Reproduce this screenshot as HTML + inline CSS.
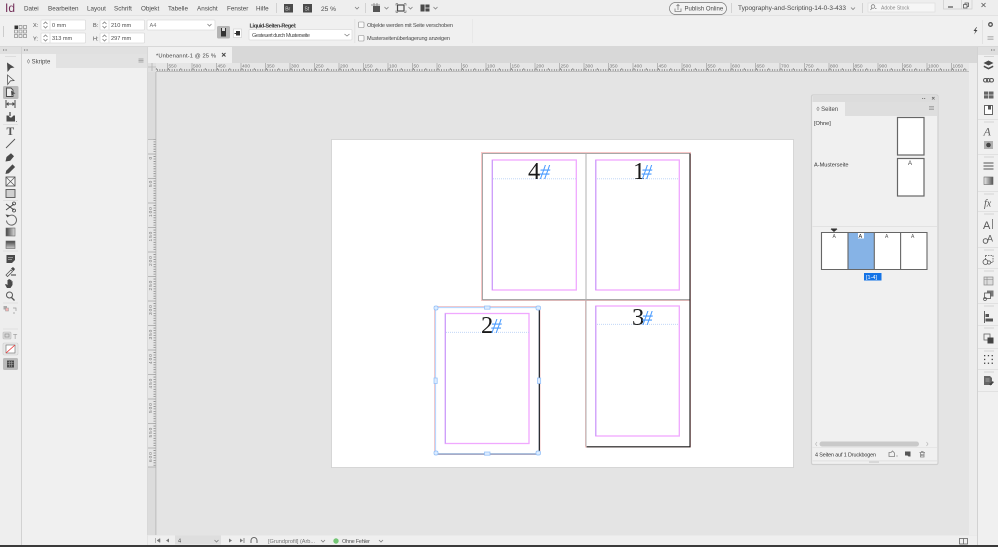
<!DOCTYPE html>
<html lang="de"><head><meta charset="utf-8"><title>InDesign</title>
<style>
html,body{margin:0;padding:0;width:998px;height:547px;overflow:hidden;background:#e4e4e4}
svg{display:block;filter:blur(.3px)}
text{font-family:"Liberation Sans",sans-serif;font-size:6.3px;fill:#4a4a4a}
.s{font-size:5.6px}.r{font-size:4.8px;fill:#777}
.n{font-family:"Liberation Serif",serif;font-size:24.5px;fill:#1a1a1a}
.h{font-family:"Liberation Serif",serif;font-style:italic;font-size:21px;fill:#4a9bff}
.f{fill:#fff;stroke:#dcdcdc;stroke-width:.8}
.l{fill:none;stroke:#4a4a4a;stroke-width:1}
.d{fill:#4a4a4a}
.g{fill:none;stroke:#808080;stroke-width:.8}
.m{fill:none;stroke:#f0a8ff;stroke-width:1.3}
.b{fill:none;stroke:#b8d0f5;stroke-width:.8;stroke-dasharray:1 1}
.hd{fill:#dcecff;stroke:#8dbdf8;stroke-width:.7}
</style></head><body>
<svg width="998" height="547" viewBox="0 0 998 547" xmlns="http://www.w3.org/2000/svg">
<!-- base -->
<rect width="998" height="547" fill="#e4e4e4"/>
<rect width="998" height="16" fill="#eeeeee"/>
<rect y="15" width="998" height="1" fill="#e2e2e2"/>
<rect y="16" width="998" height="31" fill="#f0f0f0"/>
<rect y="46" width="998" height="1" fill="#d8d8d8"/>

<!-- menu -->
<text x="5" y="12" style="font-size:12px;fill:#74305a">Id</text>
<text x="24" y="10.5">Datei</text><text x="48" y="10.5">Bearbeiten</text><text x="87" y="10.5">Layout</text><text x="114" y="10.5">Schrift</text><text x="141" y="10.5">Objekt</text><text x="168" y="10.5">Tabelle</text><text x="197" y="10.5">Ansicht</text><text x="227" y="10.5">Fenster</text><text x="256" y="10.5">Hilfe</text>
<rect x="276" y="3" width=".8" height="10" fill="#ccc"/>
<rect x="284" y="4" width="9" height="8.5" fill="#4a4a4a"/><text x="285.2" y="10.5" style="font-size:5px;fill:#ddd">Br</text>
<rect x="303" y="4" width="9" height="8.5" fill="#4a4a4a"/><text x="304.5" y="10.5" style="font-size:5px;fill:#ddd">St</text>
<text x="321" y="11" style="font-size:6.6px">25 %</text>
<path class="g" d="M355 7l2 2 2-2M384.500 7l2 2 2-2M408.500 7l2 2 2-2M433.500 7l2 2 2-2"/>
<rect x="365" y="3" width=".8" height="10" fill="#ccc"/>
<rect x="373" y="6" width="7" height="6" fill="#555"/><path class="g" d="M371 5h9M374 3v3M377 3v3"/>
<rect x="397.500" y="5" width="6.500" height="6" fill="none" stroke="#4a4a4a" stroke-width="1.200"/><path class="g" d="M396 3.500h2M396 3.500v2M404 3.500h2M406 3.500v2M396 12.500h2M396 10.500v2M404 12.500h2M406 10.500v2"/>
<rect x="420.500" y="4.500" width="9" height="7" fill="#4a4a4a"/><path d="M425 4.500v7M425 8h4.500" stroke="#eee" stroke-width=".8"/>

<rect x="669.500" y="2.500" width="57" height="12" rx="6" fill="#f2f2f2" stroke="#777" stroke-width=".7"/>
<path class="g" d="M675 8.500v3h6v-3M678 10v-5.500M676.500 6l1.500-1.500 1.500 1.500"/>
<text x="684.500" y="10.500" style="font-size:6px">Publish Online</text>
<rect x="731" y="3" width=".8" height="10" fill="#ccc"/>
<text x="738" y="10" style="font-size:6.500px" textLength="108">Typography-and-Scripting-14-0-3-433</text>
<path class="g" d="M851 7.500l2 2 2-2"/>
<rect x="862" y="3" width=".8" height="10" fill="#ccc"/>
<rect x="868" y="3" width="67" height="9" fill="#f6f6f6" stroke="#ddd" stroke-width=".7"/>
<circle cx="873" cy="6.500" r="1.800" class="g"/><path class="g" d="M872 8l-1.500 2M875 8.500l1.500 0"/>
<text x="881" y="9.500" style="font-size:5px;fill:#888">Adobe Stock</text>
<path d="M943.500 0v9h28.500V0M961.500 0v9" fill="none" stroke="#ccc" stroke-width=".7"/>
<path d="M948 7h5" stroke="#333" stroke-width="1"/><path class="g" style="stroke:#555" d="M963.500 4.500h3.500v3.500h-3.500zM965 4.500v-1.500h3.500v3.500h-1.500"/>
<path d="M981.500 3l4 4M985.500 3l-4 4" stroke="#555" stroke-width=".8"/>

<!-- control bar -->
<rect x="3" y="26" width=".8" height="11" fill="#c4c4c4"/>
<g fill="none" stroke="#8a8a8a" stroke-width=".7">
<rect x="19" y="25.500" width="3" height="3"/><rect x="23.500" y="25.500" width="3" height="3"/><rect x="14.500" y="30" width="3" height="3"/><rect x="19" y="30" width="3" height="3"/><rect x="23.500" y="30" width="3" height="3"/><rect x="14.500" y="34.500" width="3" height="3"/><rect x="19" y="34.500" width="3" height="3"/><rect x="23.500" y="34.500" width="3" height="3"/></g>
<rect x="14.500" y="25.500" width="3.500" height="3.500" fill="#333"/>
<text class="s" x="33" y="27">X:</text><text class="s" x="33" y="40.500">Y:</text><text class="s" x="93" y="27">B:</text><text class="s" x="93" y="40.500">H:</text>
<rect class="f" x="41" y="20" width="44.500" height="10" rx="1"/><rect class="f" x="41" y="33" width="44.500" height="10" rx="1"/><rect class="f" x="100" y="20" width="44.500" height="10" rx="1"/><rect class="f" x="100" y="33" width="44.500" height="10" rx="1"/>
<path class="g" d="M50 20v10M50 33v10M109 20v10M109 33v10" style="stroke:#ddd"/>
<path class="g" d="M43.500 24l2-2 2 2M43.500 26l2 2 2-2M43.500 37l2-2 2 2M43.500 39l2 2 2-2M102.500 24l2-2 2 2M102.500 26l2 2 2-2M102.500 37l2-2 2 2M102.500 39l2 2 2-2"/>
<text class="s" x="52" y="27">0 mm</text><text class="s" x="52" y="40">313 mm</text><text class="s" x="111" y="27">210 mm</text><text class="s" x="111" y="40">297 mm</text>
<rect class="f" x="147" y="20" width="68" height="10" rx="1"/><text class="s" x="149.500" y="27" style="fill:#777">A4</text><path class="g" d="M207.500 24l2 2 2-2"/>
<rect x="217" y="26" width="13" height="12.500" rx="1.500" fill="#b4b4b4"/><rect x="221" y="28" width="5" height="8.500" fill="#333"/><path d="M222 28h3v3h-3z" fill="#ddd"/>
<rect x="233.500" y="29" width="8" height="8.500" fill="#fff" stroke="#ccc" stroke-width=".6"/><rect x="236" y="31" width="4" height="4.500" fill="#333"/><rect x="234.500" y="33" width="2" height="1" fill="#333"/>
<text class="s" x="249.500" y="27.500" style="fill:#333;font-weight:700" textLength="47">Liquid-Seiten-Regel:</text>
<rect class="f" x="249" y="29.500" width="103" height="10.500" rx="1"/><text class="s" x="252" y="37" textLength="58">Gesteuert durch Musterseite</text><path class="g" d="M344.500 34l2.500 2 2.500-2"/>
<rect x="354.500" y="19" width=".7" height="24" fill="#ddd"/>
<rect x="358.500" y="22" width="5.500" height="5.500" rx=".8" fill="#fafafa" stroke="#888" stroke-width=".6"/><rect x="358.500" y="35.500" width="5.500" height="5.500" rx=".8" fill="#fafafa" stroke="#888" stroke-width=".6"/>
<text class="s" x="367" y="27" textLength="86">Objekte werden mit Seite verschoben</text><text class="s" x="367" y="40" textLength="83">Musterseitenüberlagerung anzeigen</text>
<rect x="472" y="19" width=".7" height="24" fill="#e4e4e4"/>
<path d="M976.500 27l-3 4h2l-1.500 3.500 3.500-4.500h-2l1.500-3z" fill="#444"/>
<rect x="982" y="20" width=".7" height="24" fill="#ddd"/>
<circle cx="990.500" cy="24.500" r="1.800" fill="none" stroke="#555" stroke-width="1.300"/>
<path d="M987.500 36.500h6M987.500 38h6M987.500 39.500h6" stroke="#aaa" stroke-width=".7"/>

<!-- panel strips -->
<rect y="47" width="148" height="7" fill="#e0e0e0"/>
<path d="M3 50h1.200M5.500 50h1.200M24 50h1.200M26.500 50h1.200" stroke="#666" stroke-width="1"/>
<rect y="54" width="21" height="493" fill="#eeeeee"/>
<rect x="21" y="47" width="1" height="500" fill="#d2d2d2"/>
<rect x="22" y="54" width="125" height="493" fill="#f0f0f0"/>
<rect x="22" y="54" width="125" height="14" fill="#e2e2e2"/>
<rect x="22" y="54" width="34" height="15" fill="#f0f0f0"/>
<text x="27" y="63.500" style="font-size:6px">◊ Skripte</text>
<path d="M138.500 59h5M138.500 60.500h5M138.500 62h5" stroke="#999" stroke-width=".8"/>
<rect x="5" y="56" width="11" height="1" fill="#ddd"/>
<rect x="147" y="47" width="1" height="488" fill="#d8d8d8"/>

<!-- tab strip -->
<rect x="148" y="47" width="830" height="16" fill="#d8d8d8"/>
<rect x="148" y="47" width="84" height="16" fill="#f0f0f0"/>
<text x="156" y="57.500" style="font-size:5.800px;fill:#444" textLength="60">*Unbenannt-1 @ 25 %</text>
<path d="M222 53l3.500 3.500M225.500 53l-3.500 3.500" stroke="#444" stroke-width="1"/>

<!-- h ruler -->
<rect x="148" y="63" width="821" height="8.500" fill="#e6e6e6"/>
<rect x="148" y="71" width="821" height=".8" fill="#b4b4b4"/>
<rect x="148" y="63" width="8" height="9" fill="#e0e0e0"/><path class="g" d="M152 63v8M148 67h8" style="stroke:#b4b4b4"/>
<path d="M157 70h811" stroke="#888" stroke-width="2" stroke-dasharray=".8 1.650" fill="none"/>
<path d="M155.900 69h812" stroke="#888" stroke-width="2" stroke-dasharray=".8 11.450" fill="none"/>
<path d="M167.500 63v8M192 63v8M216.500 63v8M241 63v8M265.500 63v8M290 63v8M314.500 63v8M339 63v8M363.500 63v8M388 63v8M412.500 63v8M437 63v8M461.500 63v8M486 63v8M510.500 63v8M535 63v8M559.500 63v8M584 63v8M608.500 63v8M633 63v8M657.500 63v8M682 63v8M706.500 63v8M731 63v8M755.500 63v8M780 63v8M804.500 63v8M829 63v8M853.500 63v8M878 63v8M902.500 63v8M927 63v8M951.500 63v8" stroke="#a0a0a0" stroke-width=".7" fill="none"/>
<g>
<text class="r" x="168.500" y="67.500">550</text><text class="r" x="193" y="67.500">500</text><text class="r" x="217.500" y="67.500">450</text><text class="r" x="242" y="67.500">400</text><text class="r" x="266.500" y="67.500">350</text><text class="r" x="291" y="67.500">300</text><text class="r" x="315.500" y="67.500">250</text><text class="r" x="340" y="67.500">200</text><text class="r" x="364.500" y="67.500">150</text><text class="r" x="389" y="67.500">100</text><text class="r" x="413.500" y="67.500">50</text><text class="r" x="438" y="67.500">0</text><text class="r" x="462.500" y="67.500">50</text><text class="r" x="487" y="67.500">100</text><text class="r" x="511.500" y="67.500">150</text><text class="r" x="536" y="67.500">200</text><text class="r" x="560.500" y="67.500">250</text><text class="r" x="585" y="67.500">300</text><text class="r" x="609.500" y="67.500">350</text><text class="r" x="634" y="67.500">400</text><text class="r" x="658.500" y="67.500">450</text><text class="r" x="683" y="67.500">500</text><text class="r" x="707.500" y="67.500">550</text><text class="r" x="732" y="67.500">600</text><text class="r" x="756.500" y="67.500">650</text><text class="r" x="781" y="67.500">700</text><text class="r" x="805.500" y="67.500">750</text><text class="r" x="830" y="67.500">800</text><text class="r" x="854.500" y="67.500">850</text><text class="r" x="879" y="67.500">900</text><text class="r" x="903.500" y="67.500">950</text><text class="r" x="928" y="67.500">1000</text><text class="r" x="952.500" y="67.500">1050</text>
</g>

<!-- v ruler -->
<rect x="148" y="72" width="8" height="463" fill="#dcdcdc"/>
<rect x="148" y="139" width="8" height="328" fill="#e6e6e6"/>
<rect x="155.500" y="72" width=".8" height="463" fill="#b4b4b4"/>
<path d="M154.500 139v328" stroke="#888" stroke-width="2" stroke-dasharray=".8 1.650" fill="none"/>
<path d="M148 139.300h8M148 154h8M148 178.500h8M148 203h8M148 227.500h8M148 252h8M148 276.500h8M148 301h8M148 325.500h8M148 350h8M148 374.500h8M148 399h8M148 423.500h8M148 448h8M148 467h8" stroke="#a8a8a8" stroke-width=".7" fill="none"/>
<g style="letter-spacing:.9px">
<text class="r" transform="translate(152 159.500) rotate(-90)">0</text>
<text class="r" transform="translate(152 187) rotate(-90)">50</text>
<text class="r" transform="translate(152 217) rotate(-90)">100</text>
<text class="r" transform="translate(152 241.500) rotate(-90)">150</text>
<text class="r" transform="translate(152 266) rotate(-90)">200</text>
<text class="r" transform="translate(152 290.500) rotate(-90)">250</text>
<text class="r" transform="translate(152 315) rotate(-90)">300</text>
<text class="r" transform="translate(152 339.500) rotate(-90)">350</text>
<text class="r" transform="translate(152 364) rotate(-90)">400</text>
<text class="r" transform="translate(152 388.500) rotate(-90)">450</text>
<text class="r" transform="translate(152 413) rotate(-90)">500</text>
<text class="r" transform="translate(152 437.500) rotate(-90)">550</text>
<text class="r" transform="translate(152 462) rotate(-90)">600</text>
</g>

<!-- canvas right -->
<rect x="969" y="63" width="8.500" height="472" fill="#ececec"/>

<!-- page -->
<rect x="331.500" y="139.500" width="462" height="328" fill="#fff" stroke="#cfcfcf" stroke-width=".8"/>
<!-- bleeds -->
<g fill="none" stroke="#f7c0c0" stroke-width=".9">
<rect x="481.500" y="152.500" width="209" height="148"/>
<rect x="585.500" y="300" width="105" height="147"/>
<rect x="434.500" y="306.500" width="105.500" height="148"/>
</g>
<!-- page edges -->
<path d="M482.500 300V153.500H690" fill="none" stroke="#a8a8a8" stroke-width="1"/>
<path d="M482.500 299.800H690" stroke="#8c8c8c" stroke-width="1"/>
<path d="M586 153.500V446" stroke="#b0b0b0" stroke-width="1"/>
<path d="M690 153.500V446.800H586.500" fill="none" stroke="#1a1a1a" stroke-width="1.100"/>
<!-- page 2 -->
<path d="M435.500 307.500H539.300V454H435.500Z" fill="none" stroke="#b8d8ff" stroke-width="1.200"/>
<path d="M539.300 308V453.500" stroke="#111" stroke-width="1.100"/>
<path d="M436 454H539" stroke="#6b8cb8" stroke-width="1.100"/>
<!-- margins -->
<rect class="m" x="492.300" y="160" width="84" height="130"/>
<rect class="m" x="595.800" y="160" width="83.500" height="130"/>
<rect class="m" x="595.800" y="306" width="83.500" height="130"/>
<rect class="m" x="445.300" y="313.500" width="83.700" height="130"/>
<path d="M492.300 160v130M595.800 160v130M595.800 306v130M445.300 313.500v130" stroke="#c49cf8" stroke-width="1"/>
<path class="b" d="M493 178.800h83M597 178.800h82M597 324.300h82M446 332.300h83"/>
<!-- numbers -->
<text class="n" x="528" y="179">4</text><text class="h" x="539.500" y="179">#</text>
<text class="n" x="633" y="179">1</text><text class="h" x="641.500" y="179">#</text>
<text class="n" x="632" y="325">3</text><text class="h" x="642" y="325">#</text>
<text class="n" x="481" y="333">2</text><text class="h" x="491" y="333">#</text>
<!-- handles -->
<g><rect class="hd" x="434" y="306" width="4" height="4" rx="1.500"/><rect class="hd" x="484.500" y="306" width="5.500" height="3.200"/><rect class="hd" x="536" y="306" width="4.500" height="4" rx="1.500"/><rect class="hd" x="434" y="378" width="3.200" height="5.500"/><rect class="hd" x="537.500" y="378" width="3.200" height="5.500"/><rect class="hd" x="434" y="451" width="4" height="4" rx="1.500"/><rect class="hd" x="484.500" y="452" width="5.500" height="3.200"/><rect class="hd" x="536" y="451" width="4.500" height="4" rx="1.500"/></g>

<!-- pages panel -->
<rect x="811.500" y="95" width="126.500" height="369.500" rx="1.500" fill="#f0f0f0" stroke="#cfcfcf" stroke-width="1.200"/>
<rect x="812.500" y="96" width="124.500" height="6.500" fill="#dcdcdc"/>
<rect x="812.500" y="102" width="124.500" height="14" fill="#dedede"/>
<rect x="812.500" y="102" width="32.500" height="14" fill="#f0f0f0"/>
<text x="816.500" y="111" style="font-size:6px">◊ Seiten</text>
<path d="M929 106.500h5M929 108h5M929 109.500h5" stroke="#999" stroke-width=".8"/>
<path d="M922 98.500h1.200M924 98.500h1.200M932 97l2.500 2.500M934.500 97l-2.500 2.500" stroke="#666" stroke-width=".8"/>
<text class="s" x="814" y="125" style="fill:#333">[Ohne]</text>
<text class="s" x="814" y="166.500" style="fill:#333">A-Musterseite</text>
<rect x="897.500" y="117.500" width="26.500" height="37.500" fill="#fff" stroke="#666" stroke-width="1.200"/>
<rect x="897.500" y="158.500" width="26.500" height="37.500" fill="#fff" stroke="#666" stroke-width="1.200"/>
<text x="908" y="165" style="font-size:6px;fill:#444">A</text>
<rect x="812.500" y="226" width="124.500" height=".9" fill="#e0e0e0"/>
<path d="M830.500 229h7l-3.500 3z" fill="#333"/><rect x="831" y="228.500" width="6" height=".9" fill="#333"/>
<rect x="821.500" y="232.500" width="106" height="37" fill="#fff"/>
<rect x="847.800" y="232.500" width="26.500" height="37" fill="#86b3e6"/>
<path d="M821.500 232.500H927V269.500H821.500ZM848 232.500V269.500M874.300 232.500V269.500M900.600 232.500V269.500" fill="none" stroke="#666" stroke-width="1.100"/>
<rect x="858" y="233" width="6" height="5.500" fill="#fff"/>
<g><text x="832.500" y="238" style="font-size:5px;fill:#555">A</text><text x="858.500" y="238" style="font-size:5.500px;fill:#222">A</text><text x="885" y="238" style="font-size:5px;fill:#555">A</text><text x="911" y="238" style="font-size:5px;fill:#555">A</text></g>
<rect x="864" y="273" width="17.500" height="7.500" fill="#1473e6"/>
<text x="866" y="279" style="font-size:5.500px;fill:#fff">[1-4]</text>
<!-- scrollbar + footer -->
<rect x="819.500" y="441.500" width="99.500" height="5" rx="2.500" fill="#c9c9c9"/>
<path d="M817 442l-1.500 2 1.500 2M926.500 442l1.500 2-1.500 2" fill="none" stroke="#bbb" stroke-width=".7"/>
<rect x="812.500" y="447" width="124.500" height=".8" fill="#e4e4e4"/>
<text x="815" y="456.500" style="font-size:5.400px;fill:#333" textLength="61">4 Seiten auf 1 Druckbogen</text>
<path class="g" d="M889 456.500v-4h2l1.500-1.500 2 2v3.500z"/><circle cx="897" cy="456" r=".5" fill="#555"/>
<path d="M905 451.500h5.500v5h-2l-1-1H905z" fill="#555"/>
<path class="g" d="M919.500 452.500h5.500M920.500 452.500v4.500h3.500v-4.500M921 451.500h2.500M921.700 454v2M922.900 454v2"/>
<rect x="812.500" y="460.500" width="124.500" height=".8" fill="#dcdcdc"/>
<rect x="869" y="461" width="10" height="2" fill="#d8d8d8"/>

<!-- status -->
<rect x="148" y="535.500" width="830" height="9.500" fill="#efefef"/>
<path d="M155.500 538v5M160 538.500l-3 2 3 2z" fill="#777" stroke="#777" stroke-width=".5"/>
<path d="M169 538.500l-3 2 3 2z" fill="#777"/>
<rect x="175" y="535.500" width="46" height="9" fill="#dedede"/>
<text class="s" x="178" y="542.500">4</text>
<path class="g" d="M214.500 540l2 2 2-2M321 540l2 2 2-2M379 540l2 2 2-2"/>
<path d="M229 538.500l3 2-3 2zM240 538.500l3 2-3 2z" fill="#777"/><path d="M244 538v5" stroke="#777" stroke-width=".8"/>
<path d="M251 543v-2.500a3 3 0 0 1 6 0V543" fill="none" stroke="#666" stroke-width="1"/>
<text class="s" x="268" y="543" style="fill:#777" textLength="47">[Grundprofil] (Arb...</text>
<circle cx="336" cy="541" r="2.700" fill="#74c675"/>
<text class="s" x="342" y="543" style="fill:#555" textLength="28">Ohne Fehler</text>
<rect x="959.500" y="538.500" width="8" height="5.500" fill="none" stroke="#666" stroke-width=".8"/><path d="M963.500 538.500v5.500" stroke="#666" stroke-width=".8"/>
<rect y="545" width="998" height="2" fill="#3a3a3a"/>

<!-- right dock -->
<rect x="977" y="55" width="21" height="490" fill="#f0f0f0"/>
<rect x="977" y="47" width="1" height="498" fill="#d2d2d2"/>
<rect x="978" y="47" width="20" height="8" fill="#dfdfdf"/>
<path d="M991 50h1.200M993.500 50h1.200" stroke="#666" stroke-width="1"/>
<path d="M978 119.500h20M978 154.500h20M978 191.500h20M978 211.500h20M978 247.500h20M978 268.500h20M978 303.500h20M978 325.500h20M978 348.500h20M978 369.500h20M978 391.500h20" stroke="#dcdcdc" stroke-width=".8"/>
<path d="M984 56.500h10M984 122h10M984 157h10M984 194h10M984 214h10M984 250h10M984 271h10M984 306h10M984 328h10M984 351h10M984 372h10" stroke="#cccccc" stroke-width=".8"/>
<path class="d" d="M988.500 60.500l5 2.500-5 2.500-5-2.500zM984 65.500l4.500 2.200 4.500-2.200.4 1.500-4.900 2.500-4.900-2.500z"/>
<g fill="none" stroke="#555" stroke-width="1"><rect x="983.500" y="78.500" width="4" height="3.500" rx="1.700"/><rect x="986.500" y="78.500" width="3.500" height="3.500" rx="1.700"/><rect x="989.500" y="78.500" width="4" height="3.500" rx="1.700"/></g>
<rect x="984" y="91.500" width="9.500" height="7" fill="#666"/><path d="M984 95h9.500M988.500 91.500v7" stroke="#ddd" stroke-width=".8"/>
<path d="M984.500 105.500h8v9h-8z" fill="#fff" stroke="#666" stroke-width="1"/><rect x="988" y="105" width="3" height="4.500" fill="#555"/>
<text x="983.500" y="135.500" style="font-family:'Liberation Serif',serif;font-style:italic;font-size:12px;fill:#666">A</text>
<rect x="984" y="141" width="9" height="8" fill="#b0b0b0"/><circle cx="988.500" cy="145" r="2.300" fill="#444"/>
<path d="M983.500 163h10M983.500 166h10M983.500 169h10" stroke="#555" stroke-width="1"/>
<defs><linearGradient id="gr"><stop offset="0" stop-color="#eee"/><stop offset="1" stop-color="#555"/></linearGradient></defs>
<rect x="984" y="177" width="9" height="7.500" fill="url(#gr)" stroke="#666" stroke-width=".6"/>
<text x="984" y="206.500" style="font-family:'Liberation Serif',serif;font-style:italic;font-size:10px;fill:#555">fx</text>
<text x="983" y="229" style="font-size:11px;fill:#555">A</text><path d="M992.500 219v10" stroke="#666" stroke-width=".8"/>
<text x="987" y="241.500" style="font-size:9px;fill:#555">A</text><circle cx="985.500" cy="241" r="2.300" fill="none" stroke="#555" stroke-width=".9"/>
<rect x="985.500" y="255.500" width="7.500" height="7" fill="none" stroke="#555" stroke-width=".8" stroke-dasharray="1.500 1"/><circle cx="985.500" cy="262" r="2.500" fill="#f0f0f0" stroke="#555" stroke-width=".8"/><circle cx="989" cy="262.500" r="1.600" fill="#f0f0f0" stroke="#555" stroke-width=".7"/>
<rect x="984" y="277" width="9" height="8" fill="#ddd" stroke="#888" stroke-width=".7"/><path d="M987 277v8M984 279.500h9" stroke="#888" stroke-width=".6"/>
<rect x="987" y="290.500" width="6.500" height="6" fill="#777"/><rect x="984.500" y="293" width="6" height="5.500" fill="#f0f0f0" stroke="#555" stroke-width=".8"/><circle cx="985" cy="299" r="1.500" fill="none" stroke="#555" stroke-width=".7"/>
<path d="M984.500 311v12" stroke="#555" stroke-width=".9"/><rect x="985.500" y="314" width="3.500" height="3" fill="#555"/><rect x="985.500" y="318.500" width="7.500" height="3" fill="#555"/>
<rect x="984" y="334" width="6" height="6" fill="#f0f0f0" stroke="#666" stroke-width=".8"/><rect x="987.500" y="337.500" width="6" height="6" fill="#444"/>
<g fill="#444"><rect x="984" y="355" width="1.300" height="1.300"/><rect x="987.800" y="355" width="1.300" height="1.300"/><rect x="991.600" y="355" width="1.300" height="1.300"/><rect x="984" y="358.800" width="1.300" height="1.300"/><rect x="991.600" y="358.800" width="1.300" height="1.300"/><rect x="984" y="362.600" width="1.300" height="1.300"/><rect x="987.800" y="362.600" width="1.300" height="1.300"/><rect x="991.600" y="362.600" width="1.300" height="1.300"/></g>
<path d="M984 376h6l2 2v7h-8z" fill="#666"/><path d="M989 384l4-3 .8 1.500-3.500 3z" fill="#444"/><path d="M985.500 379h4M985.500 381h4" stroke="#ddd" stroke-width=".6"/>

<!-- left tools -->
<rect x="3" y="86" width="15.500" height="13" rx="1.500" fill="#bababa"/>
<path class="d" d="M7 62.500l7.500 5-3.800.6L7.500 72z"/>
<path d="M7.500 75l6.500 5.500-3.500.3-2.800 3.700z" fill="#f4f4f4" stroke="#555" stroke-width=".8"/>
<path d="M6.500 88h4.500l2 2v6.500H6.500z" fill="#eee" stroke="#444" stroke-width=".9"/><path class="d" d="M11 90.500l4.500 3-2.300.4-1.700 2.200z"/>
<path d="M6 100v8M15 100v8M7 104h7M8.500 102.500L7 104l1.500 1.500M12.500 102.500L14 104l-1.500 1.500" class="l"/>
<path class="d" d="M6.500 115.500h2l1.500 2h1.500l2-2h1.500v6h-8.500z"/><path d="M10 112v4" stroke="#444" stroke-width="1.200"/><circle cx="16.500" cy="121.500" r=".5" fill="#666"/>
<path d="M3 124.500h15M3 200.500h15M3 251h15M3 303h15M3 329h15" stroke="#dcdcdc" stroke-width=".8"/>
<text x="6.500" y="135" style="font-family:'Liberation Serif',serif;font-size:11.500px;font-weight:700;fill:#555">T</text>
<path d="M6 148l9-9" stroke="#555" stroke-width=".9"/>
<path class="d" d="M5.500 161.500l1-4.500 4.500-3.800 3 3-3.800 4.500z"/>
<path class="d" d="M5.500 174l.7-3.300 6.300-6.300 2.600 2.600-6.300 6.300z"/>
<rect x="6" y="177" width="9" height="9" fill="#f4f4f4" stroke="#555" stroke-width=".9"/><path d="M6 177l9 9M15 177l-9 9" stroke="#555" stroke-width=".7"/>
<rect x="6" y="189.500" width="9" height="8" fill="#d0d0d0" stroke="#555" stroke-width=".9"/>
<path d="M6 204l8 6M6 210l8-6" stroke="#444" stroke-width=".9"/><circle cx="14" cy="203.500" r="1.500" fill="none" stroke="#444" stroke-width=".8"/><circle cx="14" cy="210.500" r="1.500" fill="none" stroke="#444" stroke-width=".8"/>
<path d="M8 216.500a5 5 0 1 1-1.500 4" fill="none" stroke="#666" stroke-width="1"/><path class="d" d="M5.500 214.500l3.500.5-1.500 2.500z"/>
<defs><linearGradient id="gs"><stop offset="0" stop-color="#444"/><stop offset="1" stop-color="#ddd"/></linearGradient>
<linearGradient id="gv" x1="0" y1="0" x2="0" y2="1"><stop offset="0" stop-color="#444"/><stop offset="1" stop-color="#ccc"/></linearGradient></defs>
<rect x="6" y="228" width="9" height="8" fill="url(#gs)" stroke="#666" stroke-width=".6"/>
<rect x="6" y="241" width="9" height="7.500" fill="url(#gv)" stroke="#666" stroke-width=".6"/>
<path class="d" d="M6.500 255h8.500v5l-3 3h-5.500z"/><path d="M8 257.500h5M8 259.500h4" stroke="#ddd" stroke-width=".6"/>
<path d="M6 275l5-5 1.500 1.500-5 5z" fill="#f4f4f4" stroke="#555" stroke-width=".8"/><path class="d" d="M11 268.500l2-1.500 2 2-1.500 2.200z"/><path d="M11 275h5" stroke="#777" stroke-width="1.500"/>
<path class="d" d="M7 288l-2-3.500 1-.5 1.500 1V280h1v-1h1v.5h1v.5h1v1.500l1-.5v4l-2 3H8z"/>
<circle cx="9.500" cy="295" r="3" fill="none" stroke="#555" stroke-width="1"/><path d="M11.500 297.500l3 3" stroke="#555" stroke-width="1.300"/>
<rect x="3.500" y="306" width="3.500" height="3.500" fill="#aaa"/><rect x="5.500" y="308" width="3" height="3" fill="#f5b5b5" stroke="#999" stroke-width=".5"/>
<path d="M13 308h3v3M15 313h-2" fill="none" stroke="#999" stroke-width=".7"/>
<rect x="3" y="332" width="8" height="7" rx="1" fill="#d8d8d8" stroke="#bbb" stroke-width=".6"/><rect x="5" y="334" width="4" height="3" fill="none" stroke="#888" stroke-width=".6"/>
<text x="13" y="339" style="font-size:7px;fill:#999">T</text>
<rect x="3" y="343" width="15" height="12" rx="1.500" fill="#e8e8e8" stroke="#ccc" stroke-width=".6"/>
<rect x="6" y="345" width="9" height="8" fill="#fff" stroke="#666" stroke-width=".6"/><path d="M6 353l9-8" stroke="#e33" stroke-width=".8"/>
<rect x="3" y="358" width="15" height="12" rx="1.500" fill="#bababa"/>
<rect x="7" y="360.500" width="7" height="7" fill="#4a4a4a"/><path d="M7.500 362.500h6M7.500 364.500h6M9.500 361v6M11.500 361v6" stroke="#aaa" stroke-width=".5"/>
</svg>
</body></html>
